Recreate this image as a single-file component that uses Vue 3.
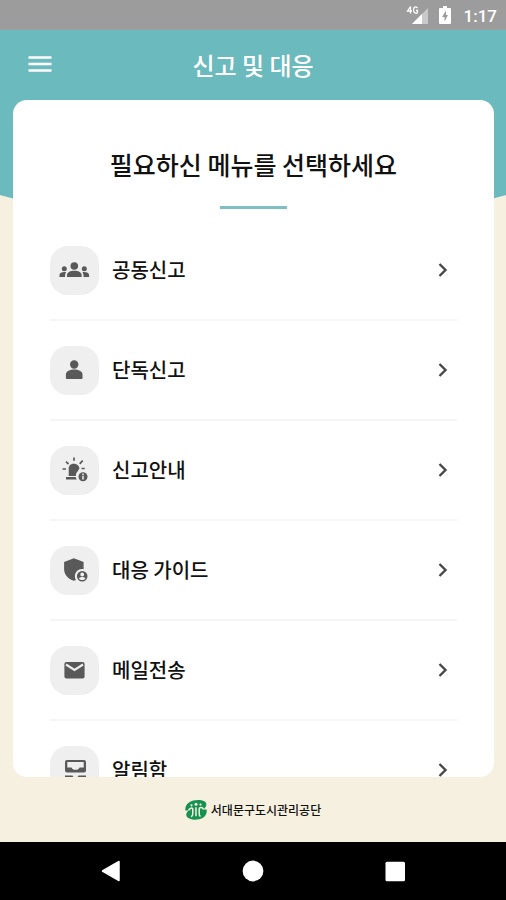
<script setup>
const items = [
  { id: 'group', label: '공동신고' },
  { id: 'single', label: '단독신고' },
  { id: 'notice', label: '신고안내' },
  { id: 'guide', label: '대응 가이드' },
  { id: 'mail', label: '메일전송' },
  { id: 'inbox', label: '알림함' },
]
</script>

<template>
  <div class="screen">
    <div class="status">
      <svg class="signal" width="24" height="20" viewBox="0 0 24 20" aria-hidden="true">
        <path d="M23 3V19H7z" fill="#c9c9c9" />
        <path d="M17 9v10H7z" fill="#fff" />
        <path d="M5.500 1.500 2.500 6h4.500M5.500 1.500v7M12.500 3c-2-2-4-1-4 2s2.500 4 4 2.500V5.500h-1.500" fill="none" stroke="#fff" stroke-width="1.300" />
      </svg>
      <svg class="battery" width="12" height="18" viewBox="0 0 12 18" aria-hidden="true">
        <path d="M4 0h4v2h3a1 1 0 0 1 1 1v14a1 1 0 0 1-1 1H1a1 1 0 0 1-1-1V3a1 1 0 0 1 1-1h3z" fill="#fff" />
        <path d="M7 4.500 3 11h2.500v4.500L9 9H7z" fill="#9c9c9c" />
      </svg>
      <time>1:17</time>
    </div>

    <div class="body">
      <header class="bar">
        <button class="menu" type="button" aria-label="메뉴">
          <svg width="24" height="18" viewBox="0 0 24 18" aria-hidden="true">
            <path d="M.5 1.500h23M.5 8h23M.5 14.500h23" stroke="#fff" stroke-width="2.600" />
          </svg>
        </button>
        <h1>신고 및 대응</h1>
      </header>

      <main class="card">
        <h2>필요하신 메뉴를 선택하세요</h2>
        <ul class="list">
          <li v-for="item in items" :key="item.id">
            <a :href="'#' + item.id">
              <span class="tile">
                <svg width="32" height="32" viewBox="0 0 32 32" fill="#595959" aria-hidden="true">
                  <template v-if="item.id === 'group'">
                    <circle cx="15.300" cy="12" r="3.800" />
                    <path d="M8 23v-2c0-2.700 3.600-4.200 7.300-4.200s7.300 1.500 7.300 4.200v2z" />
                    <circle cx="5.300" cy="14.700" r="2.500" />
                    <circle cx="25.300" cy="14.700" r="2.500" />
                    <path d="M.5 23v-1.900c0-1.900 2.200-3 4.800-3 .7 0 1.300.1 1.900.3-.7.800-1.100 1.600-1.100 2.600v2zM30.100 23v-1.900c0-1.900-2.200-3-4.800-3-.7 0-1.300.1-1.900.3.700.8 1.100 1.600 1.100 2.600v2z" />
                  </template>
                  <template v-else-if="item.id === 'single'">
                    <circle cx="15.200" cy="10.500" r="4.200" />
                    <path d="M6.900 24v-3.500c0-3.200 4.200-5 8.300-5s8.300 1.800 8.300 5V24c0 .6-.4 1-1 1H7.900c-.6 0-1-.4-1-1z" />
                  </template>
                  <template v-else-if="item.id === 'notice'">
                    <path d="M9.700 22v-7.500c0-2.800 2.200-4.700 5-4.700s5.700 1.900 5.700 4.700l-2 3.200c-1 1-1.700 2.300-1.500 4.300z" />
                    <path d="M7 23h9.700c.2 1 .6 1.900 1.200 2.600H7z" />
                    <path d="M15 3.500v3.200M7 7.700l2.500 2.500M3.500 15H7M20.700 9.900l3-3.200M22.500 14.500h3.200" fill="none" stroke="#595959" stroke-width="1.700" />
                    <circle cx="24" cy="22.700" r="4.500" />
                    <path d="M24 19.500V21M24 21.800v3.700" stroke="#efefef" stroke-width="1.500" />
                  </template>
                  <template v-else-if="item.id === 'guide'">
                    <path d="M14.900 4.300 24.600 8v7.300c-.5-.1-1-.2-1.500-.2-4 0-7.200 3.200-7.200 7.200 0 1.400.3 2.600 1 3.600l-2 .8C8.900 25 5.100 20.500 5.100 15V8z" />
                    <path fill-rule="evenodd" d="M23.200 17a5.300 5.300 0 1 0 0 10.600 5.300 5.300 0 0 0 0-10.600zm0 1.600a1.900 1.900 0 1 1 0 3.800 1.900 1.900 0 0 1 0-3.800zm0 7.500c-1.400 0-2.500-.6-3.200-1.600.1-1 2.100-1.500 3.200-1.500s3.100.5 3.200 1.500c-.7 1-1.800 1.600-3.200 1.600z" />
                  </template>
                  <template v-else-if="item.id === 'mail'">
                    <rect x="5.400" y="8" width="20.200" height="16.500" rx="2" />
                    <path d="m7 10.500 8.500 5.500 8.500-5.500" fill="none" stroke="#efefef" stroke-width="2.100" />
                  </template>
                  <template v-else>
                    <path fill-rule="evenodd" d="M8 6h17a2 2 0 0 1 2 2v8.500a2 2 0 0 1-2 2H8a2 2 0 0 1-2-2V8a2 2 0 0 1 2-2zm.3 2v5.400h4.200c.5 1.400 2 2.400 4 2.400s3.500-1 4-2.400h4.200V8z" />
                    <path d="M6 21.500h7.500c.5 1.400 1.600 2.200 3 2.200s2.500-.8 3-2.200H27v4.800a2 2 0 0 1-2 2H8a2 2 0 0 1-2-2z" />
                  </template>
                </svg>
              </span>
              <span class="label">{{ item.label }}</span>
              <svg class="chevron" width="12" height="16" viewBox="0 0 12 16" aria-hidden="true">
                <path d="m2.500 2 6 6-6 6" fill="none" stroke="#484848" stroke-width="2.400" />
              </svg>
            </a>
          </li>
        </ul>
      </main>

      <footer class="brand">
        <svg width="22" height="20" viewBox="0 0 22 20" aria-hidden="true">
          <path d="M19.500 1.200C15-.6 8-.2 4.500 2.200 1.500 4 0 6.500.3 10.500h3.200c-1.700 1.500-2.700 3.600-2 5.800C4 20.500 13 20.500 17.500 18c3-1.800 4.500-4.500 4.200-8.500h-3.200c2-1.800 3.300-4 2.700-6-.3-1-.8-1.800-1.700-2.300z" fill="#169150" />
          <circle cx="11" cy="4.300" r="1.500" fill="#f5f0df" />
          <circle cx="6.500" cy="5.300" r="1.100" fill="#f5f0df" />
          <circle cx="15.500" cy="4.600" r="1.100" fill="#f5f0df" />
          <path d="M3.500 10.500C4.500 8 7.500 7.300 7.800 9v4.500c0 1.800-.6 2.800-1.800 3.300M11 7.300v9M18.500 9.500c-.6-2.200-3.800-2.600-4.300-.8v5c0 1.500.3 2.300 1.300 2.800" fill="none" stroke="#f5f0df" stroke-width="1.500" />
        </svg>
        <span>서대문구도시관리공단</span>
      </footer>
    </div>

    <nav class="system">
      <button type="button" aria-label="뒤로">
        <svg width="22" height="22" viewBox="0 0 22 22"><path d="M2.500 11 19 1.500v19z" fill="#fff" stroke="#fff" stroke-width="1.500" stroke-linejoin="round" /></svg>
      </button>
      <button type="button" aria-label="홈">
        <svg width="22" height="22" viewBox="0 0 22 22"><circle cx="11" cy="11" r="10.400" fill="#fff" /></svg>
      </button>
      <button type="button" aria-label="최근 앱">
        <svg width="22" height="22" viewBox="0 0 22 22"><rect x="1.500" y="1.700" width="19.500" height="19.500" rx="1.500" fill="#fff" /></svg>
      </button>
    </nav>
  </div>
</template>

<style>
body {
  margin: 0;
}
</style>

<style scoped>
.screen {
  display: flex;
  flex-direction: column;
  height: 100vh;
  overflow: hidden;
  background: #f5f0df;
  font-family: "Noto Sans CJK KR", "Noto Sans", sans-serif;
  color: #111;
}

.status {
  display: flex;
  flex: none;
  align-items: center;
  justify-content: flex-end;
  height: 30px;
  padding: 0 9px;
  background: #9c9c9c;
  color: #fff;
  font: 500 17px/30px Roboto, sans-serif;
}

.signal {
  margin-right: 10px;
}

.battery {
  margin-right: 13px;
}

.status time {
  padding-top: 2px;
}

.body {
  position: relative;
  display: flex;
  flex: 1;
  flex-direction: column;
  min-height: 0;
  overflow: hidden;
}

/* Curved teal backdrop behind the title bar and the card */
.body::before {
  content: "";
  position: absolute;
  top: 0;
  left: -20%;
  width: 140%;
  height: 195px;
  border-radius: 0 0 50% 50% / 0 0 100px 100px;
  background: #6bbabe;
}

.bar,
.card,
.brand {
  position: relative;
}

.bar {
  display: grid;
  flex: none;
  grid-template-columns: 56px 1fr 56px;
  align-items: center;
  height: 70px;
  padding: 0 12px;
}

button {
  display: flex;
  align-items: center;
  justify-content: center;
  padding: 0;
  border: 0;
  background: none;
}

.menu {
  height: 48px;
}

h1,
h2 {
  margin: 0;
  font-weight: 500;
  line-height: 36px;
  text-align: center;
}

h1 {
  color: #fff;
  font-size: 24px;
}

.card {
  flex: 1;
  min-height: 0;
  margin: 0 12px 0 13px;
  padding: 0 37px;
  overflow-y: auto;
  scrollbar-width: none;
  border-radius: 14px;
  background: #fff;
}

h2 {
  padding-top: 46px;
  font-size: 25px;
}

h2::after {
  content: "";
  display: block;
  width: 67px;
  height: 3px;
  margin: 24px auto 12px;
  background: #7dbfc3;
}

.list {
  margin: 0;
  padding: 0;
  list-style: none;
}

.list a {
  display: flex;
  align-items: center;
  height: 98px;
  border-bottom: 2px solid #f6f6f6;
  color: inherit;
  text-decoration: none;
}

.tile {
  display: flex;
  flex: none;
  align-items: center;
  justify-content: center;
  width: 49px;
  height: 49px;
  border-radius: 18px;
  background: #efefef;
}

.label {
  flex: 1;
  margin-left: 13px;
  font-size: 20px;
  font-weight: 500;
  line-height: 30px;
}

.chevron {
  flex: none;
  margin-right: 8px;
}

.brand {
  display: flex;
  flex: none;
  align-items: center;
  justify-content: center;
  gap: 4px;
  height: 65px;
  font-size: 12px;
  font-weight: 500;
}

.system {
  display: grid;
  flex: none;
  grid-template-columns: repeat(3, 1fr);
  height: 58px;
  padding: 0 40px;
  background: #000;
}
</style>
